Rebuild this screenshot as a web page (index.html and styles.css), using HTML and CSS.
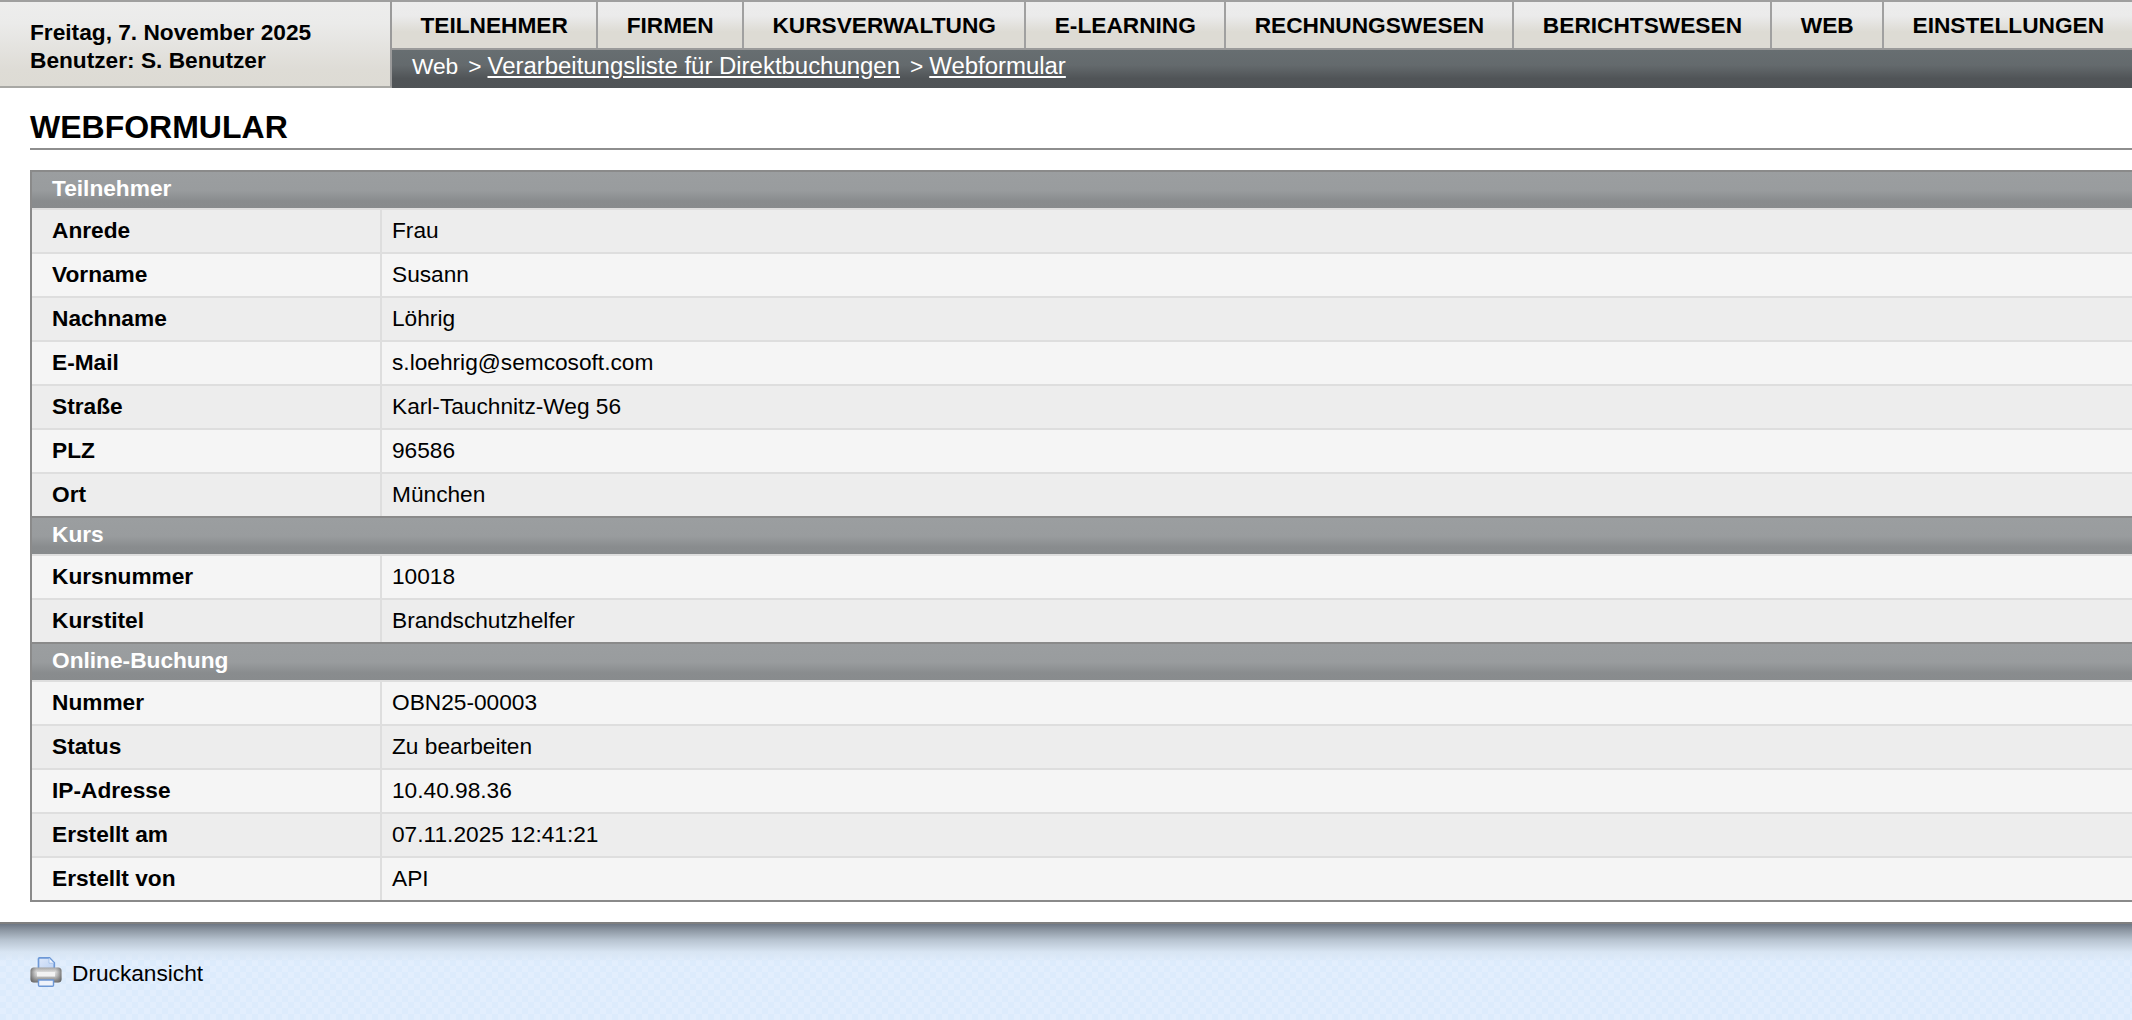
FILE: index.html
```html
<!DOCTYPE html>
<html lang="de">
<head>
<meta charset="utf-8">
<title>Webformular</title>
<link rel="stylesheet" href="styles.css">
</head>
<body>
<header class="top">
  <div class="info">
    <div>Freitag, 7. November 2025</div>
    <div>Benutzer: S. Benutzer</div>
  </div>
  <div class="navwrap">
    <nav class="nav">
      <a class="tab">TEILNEHMER</a>
      <a class="tab">FIRMEN</a>
      <a class="tab">KURSVERWALTUNG</a>
      <a class="tab">E-LEARNING</a>
      <a class="tab">RECHNUNGSWESEN</a>
      <a class="tab">BERICHTSWESEN</a>
      <a class="tab">WEB</a>
      <a class="tab last">EINSTELLUNGEN</a>
    </nav>
    <div class="crumbs"><span>Web</span><span class="sep">&gt;</span><a>Verarbeitungsliste für Direktbuchungen</a><span class="sep">&gt;</span><a>Webformular</a></div>
  </div>
</header>
<main class="content">
  <h1 class="title">WEBFORMULAR</h1>
  <table class="form">
    <colgroup><col class="c1"><col class="c2"></colgroup>
    <tbody>
      <tr class="sec"><th colspan="2">Teilnehmer</th></tr>
      <tr class="a"><th>Anrede</th><td>Frau</td></tr>
      <tr class="b"><th>Vorname</th><td>Susann</td></tr>
      <tr class="a"><th>Nachname</th><td>Löhrig</td></tr>
      <tr class="b"><th>E-Mail</th><td>s.loehrig@semcosoft.com</td></tr>
      <tr class="a"><th>Straße</th><td>Karl-Tauchnitz-Weg 56</td></tr>
      <tr class="b"><th>PLZ</th><td>96586</td></tr>
      <tr class="a"><th>Ort</th><td>München</td></tr>
      <tr class="sec"><th colspan="2">Kurs</th></tr>
      <tr class="b"><th>Kursnummer</th><td>10018</td></tr>
      <tr class="a"><th>Kurstitel</th><td>Brandschutzhelfer</td></tr>
      <tr class="sec"><th colspan="2">Online-Buchung</th></tr>
      <tr class="b"><th>Nummer</th><td>OBN25-00003</td></tr>
      <tr class="a"><th>Status</th><td>Zu bearbeiten</td></tr>
      <tr class="b"><th>IP-Adresse</th><td>10.40.98.36</td></tr>
      <tr class="a"><th>Erstellt am</th><td>07.11.2025 12:41:21</td></tr>
      <tr class="b"><th>Erstellt von</th><td>API</td></tr>
    </tbody>
  </table>
</main>
<footer class="foot">
  <a class="print">
    <svg class="printer" viewBox="0 0 32 30" width="32" height="30" aria-hidden="true">
      <defs>
        <linearGradient id="body" x1="0" y1="0" x2="0" y2="1">
          <stop offset="0" stop-color="#a8a8a8"/>
          <stop offset=".3" stop-color="#e6e6e6"/>
          <stop offset=".55" stop-color="#d0d0d0"/>
          <stop offset="1" stop-color="#6a6a6a"/>
        </linearGradient>
        <linearGradient id="ends" x1="0" y1="0" x2="1" y2="0">
          <stop offset="0" stop-color="#555" stop-opacity=".75"/>
          <stop offset=".2" stop-color="#888" stop-opacity=".1"/>
          <stop offset=".8" stop-color="#888" stop-opacity=".1"/>
          <stop offset="1" stop-color="#555" stop-opacity=".75"/>
        </linearGradient>
        <linearGradient id="paper" x1="0" y1="0" x2="1" y2="1">
          <stop offset="0" stop-color="#dfe9fa"/>
          <stop offset="1" stop-color="#bcd2f3"/>
        </linearGradient>
      </defs>
      <path d="M8.500 12V2a1.200 1.200 0 0 1 1.200-1.200h9.800l4.800 5V12z" fill="url(#paper)" stroke="#6d98d6" stroke-width="1.700"/>
      <path d="M19 1v5.200h5" fill="#eef4fd" stroke="#9dbce8" stroke-width=".8"/>
      <rect x="0.500" y="10.500" width="31" height="15" rx="3.500" fill="url(#body)"/>
      <rect x="0.500" y="10.500" width="31" height="15" rx="3.500" fill="url(#ends)"/>
      <rect x="7" y="15" width="18" height="4.500" fill="#f3f3f3"/>
      <path d="M8.500 23h15v5.300a1 1 0 0 1-1 1h-13a1 1 0 0 1-1-1z" fill="#edf2fb" stroke="#6d98d6" stroke-width="1.400"/>
    </svg>
    <span class="ptext">Druckansicht</span>
  </a>
</footer>
</body>
</html>
```

FILE: styles.css
```css
* { box-sizing: border-box; }
html, body { margin: 0; height: 100%; }
body {
  width: 2132px;
  height: 1020px;
  overflow: hidden;
  background: #fff;
  color: #000;
  font-family: "Liberation Sans", Arial, sans-serif;
  font-size: 22.7px;
  display: flex;
  flex-direction: column;
}
.top { display: flex; height: 88px; flex: none; }
.info {
  width: 392px;
  flex: none;
  padding: 16px 0 0 30px;
  font-weight: bold;
  line-height: 28px;
  border-top: 2px solid #9f9f9f;
  border-right: 2px solid #9a9a9a;
  border-bottom: 2px solid #a8a8a4;
  background: linear-gradient(#ededed 0, #ebebea 25%, #dedcd6 80%, #dddbd4 100%);
}
.navwrap { flex: 1; display: flex; flex-direction: column; min-width: 0; }
.nav {
  display: flex;
  height: 50px;
  flex: none;
  border-top: 2px solid #9f9f9f;
  border-bottom: 2px solid #9a9a9a;
  background: linear-gradient(#ededed 0, #ebebeb 30%, #dddbd4 65%, #dddbd4 100%);
}
.tab {
  padding: 0 28.400px;
  line-height: 46px;
  font-weight: bold;
  border-right: 2px solid #a0a0a0;
  white-space: nowrap;
}
.tab.last { border-right: 0; }
.crumbs {
  flex: 1;
  display: flex;
  padding-left: 20px;
  line-height: 32px;
  color: #fff;
  white-space: nowrap;
  background: linear-gradient(#676e71 0, #646a6d 40%, #505457 75%, #4f5356 100%);
}
.crumbs a { font-size: 23.950px; text-decoration: underline; text-underline-offset: 2px; }
.sep { margin: 0 6px 0 10px; }
.content { flex: 1; padding: 0 0 0 30px; min-height: 0; }
.title {
  margin: 0 0 20px;
  height: 62px;
  padding-top: 21px;
  font-size: 32px;
  line-height: 36px;
  font-weight: bold;
  border-bottom: 2px solid #8e8e8e;
}
.form {
  width: 2300px;
  table-layout: fixed;
  border-collapse: separate;
  border-spacing: 0;
  border: 2px solid #8a8a8a;
  border-right: 0;
}
.c1 { width: 350px; }
.form th, .form td {
  height: 44px;
  padding: 0 0 1px;
  text-align: left;
  white-space: nowrap;
  border-top: 2px solid #dedede;
}
.form th { padding-left: 20px; border-right: 2px solid #dedede; font-weight: bold; }
.form td { padding-left: 10px; font-weight: normal; }
.a th, .a td { background: #ededed; }
.b th, .b td { background: #f5f5f5; }
.form .sec th {
  height: 38px;
  padding: 0 0 4px 20px;
  color: #fff;
  border-right: 0;
  border-top: 2px solid #8a8a8a;
  background: linear-gradient(#9b9ea0 0, #999c9e 50%, #898c8e 80%, #888b8d 100%);
}
.form tr:first-child.sec th { border-top: 0; height: 36px; }
.foot {
  height: 98px;
  flex: none;
  border-top: 2px solid #7f7f7f;
  padding: 33px 0 0 30px;
  background:
    linear-gradient(#6e7885 0, #8c96a2 6px, #b7c3d0 16px, #d8e5f3 28px, rgba(220,235,252,0) 38px),
    repeating-conic-gradient(#dcebfc 0 25%, #e2eefd 0 50%) 0 0 / 12px 12px;
}
.print { display: flex; align-items: flex-start; gap: 10px; }
.printer { flex: none; }
.ptext { line-height: 32px; }
```
